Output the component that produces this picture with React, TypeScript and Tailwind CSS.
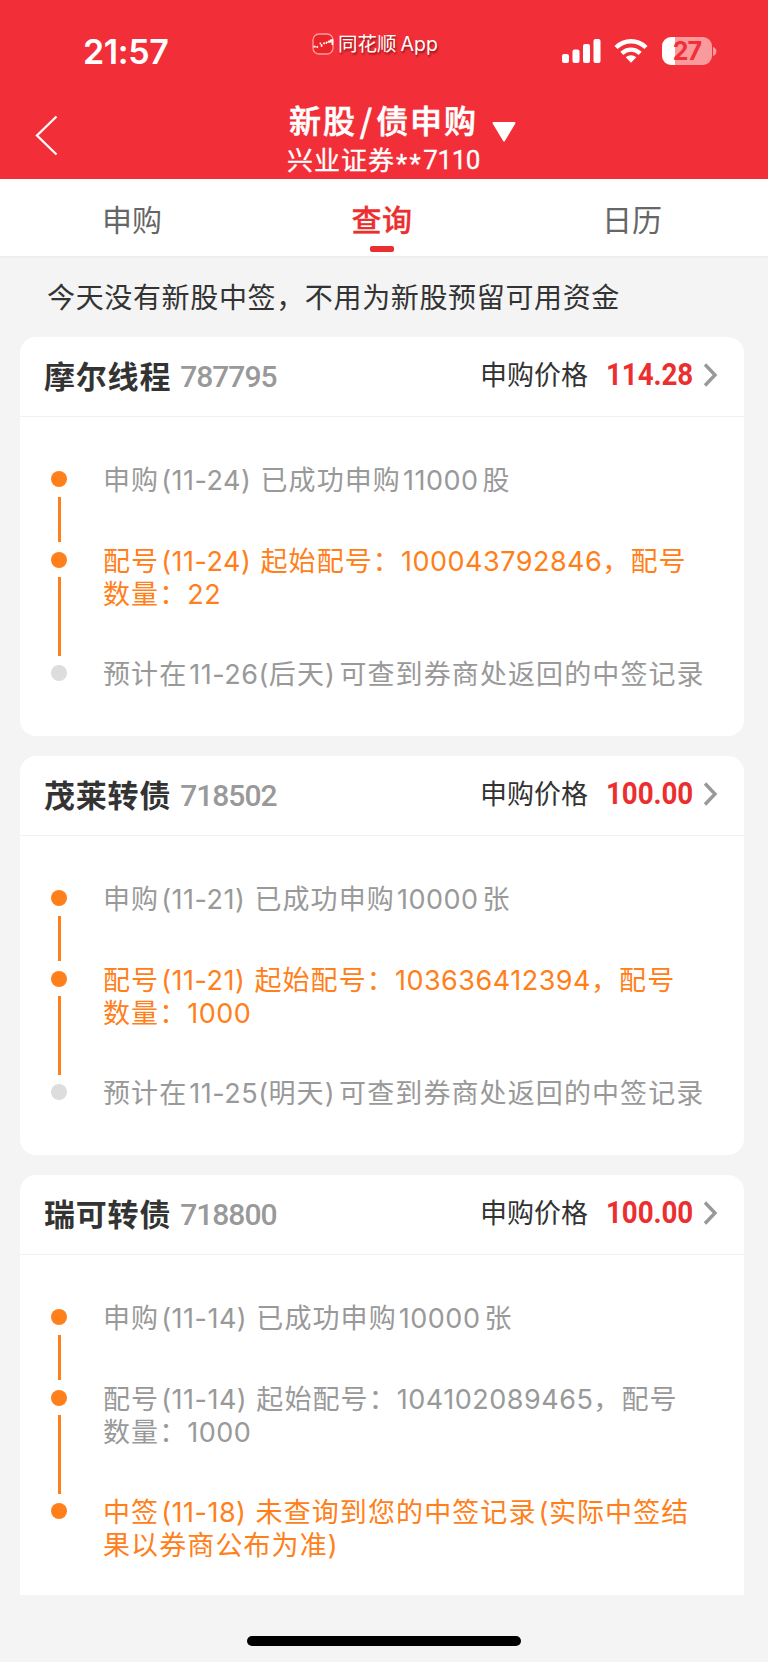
type Tone = "gray" | "orange";
type Step = { lines: string[]; tone: Tone; dot: "on" | "off" };
type Issue = { name: string; code: string; price: string; steps: Step[] };

const issues: Issue[] = [
  {
    name: "摩尔线程",
    code: "787795",
    price: "114.28",
    steps: [
      { lines: ["申购|(11-24) |已成功申购|11000|股"], tone: "gray", dot: "on" },
      { lines: ["配号|(11-24) |起始配号：|100043792846|，配号", "数量：|22"], tone: "orange", dot: "on" },
      { lines: ["预计在|11-26(|后天|)|可查到券商处返回的中签记录"], tone: "gray", dot: "off" },
    ],
  },
  {
    name: "茂莱转债",
    code: "718502",
    price: "100.00",
    steps: [
      { lines: ["申购|(11-21) |已成功申购|10000|张"], tone: "gray", dot: "on" },
      { lines: ["配号|(11-21) |起始配号：|103636412394|，配号", "数量：|1000"], tone: "orange", dot: "on" },
      { lines: ["预计在|11-25(|明天|)|可查到券商处返回的中签记录"], tone: "gray", dot: "off" },
    ],
  },
  {
    name: "瑞可转债",
    code: "718800",
    price: "100.00",
    steps: [
      { lines: ["申购|(11-14) |已成功申购|10000|张"], tone: "gray", dot: "on" },
      { lines: ["配号|(11-14) |起始配号：|104102089465|，配号", "数量：|1000"], tone: "gray", dot: "on" },
      { lines: ["中签|(11-18) |未查询到您的中签记录|(|实际中签结", "果以券商公布为准|)"], tone: "orange", dot: "on" },
    ],
  },
];

const HAN = "font-['Noto_Sans_CJK_SC',sans-serif]";
const LATIN = "font-['Inter','Noto_Sans_CJK_SC',sans-serif]";
const DIN = "font-['Roboto','Noto_Sans_CJK_SC',sans-serif]";

// Adds a small gap between Han and Latin runs, except next to punctuation.
function Line({ text }: { text: string }) {
  const runs = text.split("|");
  return (
    <div className="h-[33px] whitespace-pre leading-[33px]">
      {runs.map((run, i) => {
        if (!/[0-9()]/.test(run)) {
          return (
            <span key={i} className={`${HAN} text-[27px] tracking-[1.1px]`}>
              {run}
            </span>
          );
        }
        const before = i > 0 && !runs[i - 1].endsWith("：") && run !== ")";
        const next = runs[i + 1] ?? "";
        const after = next !== "" && !next.startsWith("，") && !run.endsWith("(") && !run.endsWith(" ");
        return (
          <span
            key={i}
            className={`${LATIN} ${before ? "ml-[2px]" : ""} ${after ? "mr-[4px]" : ""} ${run.endsWith(" ") ? "mr-[1px]" : ""} text-[27px] tracking-[0.5px]`}
          >
            {run}
          </span>
        );
      })}
    </div>
  );
}

function IssueCard({ issue, last }: { issue: Issue; last: boolean }) {
  return (
    <section className={`w-[724px] bg-white ${last ? "h-[420px] rounded-t-[16px]" : "mb-5 h-[399px] rounded-[16px]"}`}>
      <header className="flex h-[80px] items-center border-b border-[#f2f2f2] pb-[2px] pl-6 pr-[23px]">
        <h2 className={`${HAN} text-[31px] font-bold tracking-[0.8px] text-[#333]`}>{issue.name}</h2>
        <span className={`${DIN} ml-[9px] mt-[2px] text-[30px] font-medium tracking-[-1px] text-[#999]`}>{issue.code}</span>
        <div className="-mt-[2px] ml-auto flex w-[241px] items-center">
          <span className={`${HAN} text-[27px] text-[#333]`}>申购价格</span>
          <span className={`${DIN} ml-[18px] w-[88px] origin-left scale-x-[0.91] text-[30.5px] font-bold tracking-[-0.1px] text-[#eb2f30]`}>
            {issue.price}
          </span>
          <svg className="ml-[9px]" width="15" height="24" viewBox="0 0 15 24" fill="none">
            <path d="M2 1.5L12 12L2 22.5" stroke="#999" strokeWidth="3.4" />
          </svg>
        </div>
      </header>
      <div className="pl-[31px] pt-[54px]">
        {issue.steps.map((step, i) => (
          <div key={i} className={`flex ${i === 0 ? "h-[80.5px]" : i === 1 ? "h-[113.5px]" : "h-[60px]"}`}>
            <div className="flex w-4 flex-col items-center">
              <span className={`size-4 shrink-0 rounded-full ${step.dot === "on" ? "bg-[#ff801a]" : "bg-[#ddd]"}`} />
              {i < 2 && <span className="my-[9.5px] w-[3px] grow bg-[#ff801a]" />}
            </div>
            <div className={`-mt-[9px] ml-9 ${step.tone === "gray" ? "text-[#999]" : "text-[#ff801a]"}`}>
              {step.lines.map((line) => (
                <Line key={line} text={line} />
              ))}
            </div>
          </div>
        ))}
      </div>
    </section>
  );
}

function StatusBar() {
  return (
    <div className="flex h-[102px] items-start text-white">
      <span className={`${LATIN} ml-[83px] mt-[31px] w-[130px] text-[34px] font-semibold leading-[42px] tracking-[-0.4px]`}>21:57</span>
      <div className="ml-[99px] mt-[30px] flex h-[27px] w-[150px] items-center">
        <svg width="22" height="22" viewBox="0 0 22 22" fill="none">
          <rect x="1" y="1" width="20" height="20" rx="6" fill="#e9252a" stroke="#ff9a9c" strokeWidth="1.3" />
          <path d="M1.5 13.7h2.2M4.6 14.6l1.2-1.2M7.6 10.2l1.4.4M9.6 11.2v2.6M11.6 11l1-1.4M14 10.6l1.2-1.8M16.4 7.8l1.2 2M18.6 6.4v3M20.4 6v6" stroke="#fff" strokeWidth="1.7" />
        </svg>
        <span className={`${LATIN} ml-[4px] mt-[2px] whitespace-nowrap text-[19.5px] leading-[27px] [text-shadow:1px_1.5px_2px_rgba(90,0,0,.6)]`}>
          同花顺<span className="ml-1">App</span>
        </span>
      </div>
      <svg className="ml-[100px] mt-[39px]" width="39" height="24" viewBox="0 0 39 24" fill="#fff">
        <rect x="0" y="15" width="7" height="9" rx="2" />
        <rect x="10.5" y="10.5" width="7" height="13.5" rx="2" />
        <rect x="21" y="5" width="7" height="19" rx="2" />
        <rect x="31.5" y="0" width="7" height="24" rx="2" />
      </svg>
      <svg className="ml-[13px] mt-[38px]" width="34" height="26" viewBox="0 0 34 26" fill="none" stroke="#fff">
        <path d="M2 9.5C10.5 1.2 23.5 1.2 32 9.5" strokeWidth="4.4" />
        <path d="M7.8 15.3C13.2 10.4 20.8 10.4 26.2 15.3" strokeWidth="4.4" />
        <path d="M11.7 19.3C14.8 16.6 19.2 16.6 22.3 19.3L17 24.7Z" fill="#fff" stroke="none" />
      </svg>
      <div className="ml-[14px] mt-[37px] flex h-[28px] w-[50px] items-center justify-center rounded-[9px] bg-[linear-gradient(90deg,#fff_13.5px,#f99a9d_13.5px)]">
        <span className={`${LATIN} text-[25px] font-bold leading-[28px] tracking-[-0.8px] text-[#f22f38]`}>27</span>
      </div>
      <svg className="ml-[1px] mt-[47px]" width="4" height="9" viewBox="0 0 4 9">
        <path d="M0 0C4.5 1.5 4.5 7.5 0 9Z" fill="#f99a9d" />
      </svg>
    </div>
  );
}

export default function App() {
  return (
    <div className={`${HAN} flex h-[1663px] w-[768px] flex-col overflow-hidden border-b border-white bg-[#f4f4f4]`}>
      <div className="h-[179px] shrink-0 bg-[#f22f38]">
        <StatusBar />
        <div className="flex h-[77px] text-white">
          <svg className="ml-[35px] mt-[13px]" width="24" height="41" viewBox="0 0 24 41" fill="none">
            <path d="M21.5 1.5L2 20.5L21.5 39.5" stroke="#fff" strokeWidth="2.3" />
          </svg>
          <div className="-mt-[3px] ml-[228px] w-[205px]">
            <h1 className="ml-[2px] h-[40px] whitespace-nowrap text-[32px] font-medium leading-[40px] tracking-[1.9px] [-webkit-text-stroke:0.6px_#fff]">
              新股<span className="ml-[3px] mr-[2px]">/</span>债申购
            </h1>
            <p className="mt-[3px] flex h-[34px] whitespace-nowrap text-[26px] leading-[34px] tracking-[1px] [-webkit-text-stroke:0.3px_#fff]">
              兴业证券
              <span className={`${DIN} ml-[1px] pt-[5px] tracking-[2.4px]`}>**</span>
              <span className={`${DIN} pt-[1px] tracking-[-0.4px]`}>7110</span>
            </p>
          </div>
          <svg className="mt-[20px]" width="24" height="21" viewBox="0 0 24 21">
            <path d="M1.5 1H22.5L12 18.5Z" fill="#fff" stroke="#fff" strokeWidth="2" strokeLinejoin="round" />
          </svg>
        </div>
      </div>
      <nav className="flex h-[79px] shrink-0 border-b-2 border-[#eee] bg-white text-[30px] leading-[40px] text-[#666]">
        <span className="w-[264px] pt-[19px] text-center">申购</span>
        <span className="flex w-[236px] flex-col items-center pt-[19px] text-[#eb2f30]">
          <span className="font-medium tracking-[0.5px] [-webkit-text-stroke:0.3px_#eb2f30]">查询</span>
          <span className="mt-[8px] h-[6px] w-[24px] rounded-[2px] bg-[#eb2f30]" />
        </span>
        <span className="w-[264px] pt-[19px] text-center">日历</span>
      </nav>
      <p className="h-[79px] shrink-0 pl-[47px] pt-[18px] text-[28px] leading-[40px] tracking-[0.65px] text-[#333]">
        今天没有新股中签，不用为新股预留可用资金
      </p>
      <main className="h-[1258px] shrink-0 px-5">
        {issues.map((issue, i) => (
          <IssueCard key={issue.code} issue={issue} last={i === issues.length - 1} />
        ))}
      </main>
      <div className="mt-[41px] h-[10px] w-[274px] shrink-0 self-center rounded-full bg-black" />
    </div>
  );
}
